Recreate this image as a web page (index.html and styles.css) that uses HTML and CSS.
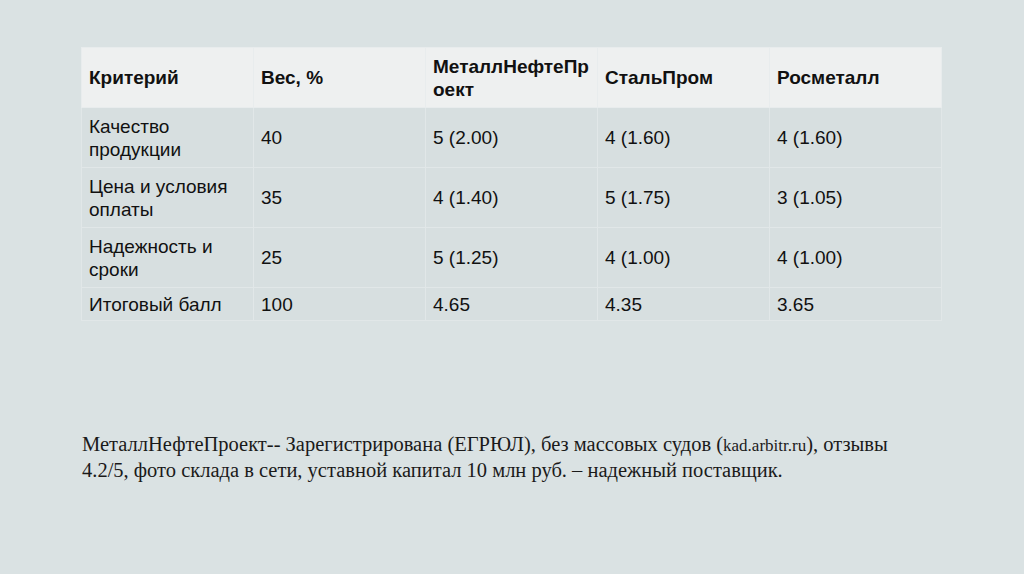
FILE: index.html
```html
<!DOCTYPE html>
<html lang="ru">
<head>
<meta charset="utf-8">
<link rel="stylesheet" href="styles.css">
</head>
<body>
<main class="slide">
  <table class="grid">
    <colgroup>
      <col class="c"><col class="c"><col class="c"><col class="c"><col class="c">
    </colgroup>
    <thead>
      <tr>
        <th>Критерий</th>
        <th>Вес, %</th>
        <th>МеталлНефтеПр<br>оект</th>
        <th>СтальПром</th>
        <th>Росметалл</th>
      </tr>
    </thead>
    <tbody>
      <tr class="tall">
        <td>Качество<br>продукции</td>
        <td>40</td>
        <td>5 (2.00)</td>
        <td>4 (1.60)</td>
        <td>4 (1.60)</td>
      </tr>
      <tr class="tall">
        <td>Цена и условия<br>оплаты</td>
        <td>35</td>
        <td>4 (1.40)</td>
        <td>5 (1.75)</td>
        <td>3 (1.05)</td>
      </tr>
      <tr class="tall">
        <td>Надежность и<br>сроки</td>
        <td>25</td>
        <td>5 (1.25)</td>
        <td>4 (1.00)</td>
        <td>4 (1.00)</td>
      </tr>
      <tr class="short">
        <td>Итоговый балл</td>
        <td>100</td>
        <td>4.65</td>
        <td>4.35</td>
        <td>3.65</td>
      </tr>
    </tbody>
  </table>
  <p class="note">МеталлНефтеПроект-- Зарегистрирована (ЕГРЮЛ), без массовых судов (<span class="url">kad.arbitr.ru</span>), отзывы<br>4.2/5, фото склада в сети, уставной капитал 10 млн руб. – надежный поставщик.</p>
</main>
</body>
</html>
```

FILE: styles.css
```css
html, body {
  margin: 0;
  padding: 0;
  background: #dae2e3;
}
.slide {
  width: 1024px;
  height: 574px;
  box-sizing: border-box;
  padding: 47px 82px 0 81px;
  display: flex;
  flex-direction: column;
}
.grid {
  width: 861px;
  border-collapse: collapse;
  table-layout: fixed;
  font-family: "Liberation Sans", Arial, sans-serif;
  font-size: 19px;
  color: #111;
}
.grid th, .grid td {
  text-align: left;
  vertical-align: middle;
  padding: 0 7px;
  line-height: 23px;
  border: 1px solid #e1e7e8;
}
.grid thead th {
  background: #eef0f0;
  height: 59px;
  font-weight: bold;
  border-color: #e8eced;
}
.grid tbody td {
  background: #d7dfe0;
}
.grid tr.tall td {
  height: 59px;
}
.grid tr.short td {
  height: 32px;
}
.note {
  margin: 111px 0 0 1px;
  font-family: "Liberation Serif", "DejaVu Serif", serif;
  font-size: 20.5px;
  line-height: 24px;
  color: #1a1a1a;
}
.url {
  font-size: 17px;
}
```
